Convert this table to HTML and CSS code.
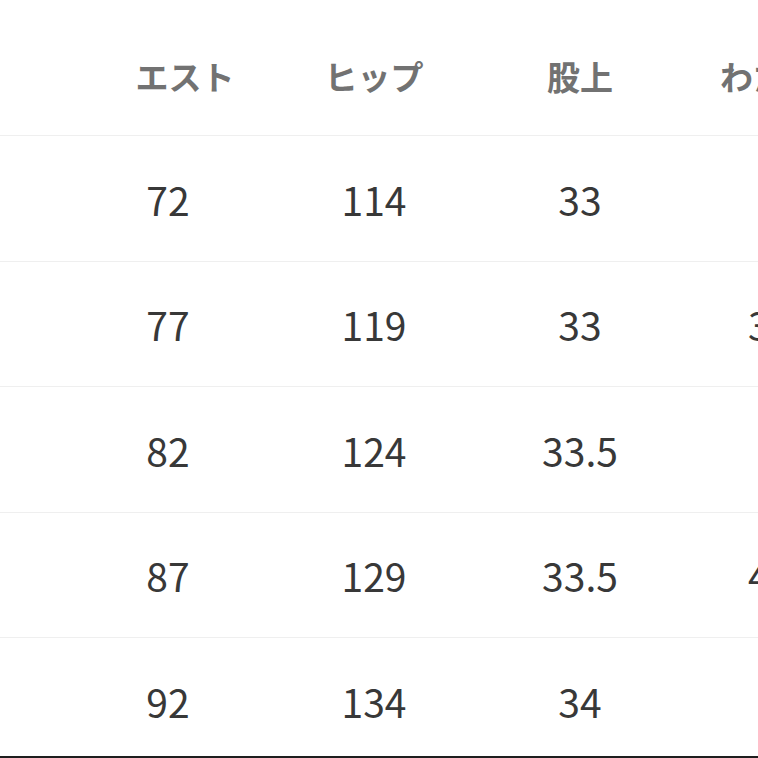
FILE: index.html
```html
<!DOCTYPE html>
<html lang="ja">
<head>
<meta charset="utf-8">
<link rel="stylesheet" href="styles.css">
</head>
<body>
<div class="frame">
  <div class="row head">
    <div class="cell hc first">エスト</div>
    <div class="cell hc">ヒップ</div>
    <div class="cell hc">股上</div>
    <div class="cell hc">わたり幅</div>
  </div>
  <div class="row">
    <div class="cell">72</div><div class="cell">114</div><div class="cell">33</div><div class="cell">29</div>
  </div>
  <div class="row">
    <div class="cell">77</div><div class="cell">119</div><div class="cell">33</div><div class="cell">31.5</div>
  </div>
  <div class="row">
    <div class="cell">82</div><div class="cell">124</div><div class="cell">33.5</div><div class="cell">34</div>
  </div>
  <div class="row">
    <div class="cell">87</div><div class="cell">129</div><div class="cell">33.5</div><div class="cell">40.5</div>
  </div>
  <div class="row last">
    <div class="cell">92</div><div class="cell">134</div><div class="cell">34</div><div class="cell">38</div>
  </div>
</div>
</body>
</html>
```
FILE: styles.css
```css
html, body {
  margin: 0;
  padding: 0;
  background: #fff;
  overflow: hidden;
}
.frame {
  width: 758px;
  height: 756px;
  overflow: hidden;
  border-bottom: 2px solid #1e1e1e;
  font-family: "Noto Sans CJK JP", "Noto Sans", sans-serif;
}
.row {
  display: grid;
  grid-template-columns: repeat(4, 206px);
  padding-left: 65px;
  height: 124.5px;
  align-items: center;
  border-bottom: 1px solid #efefef;
  width: 1000px;
}
.row.head {
  height: 135px;
}
.cell {
  text-align: center;
  font-size: 39px;
  color: #383838;
  line-height: 1;
  padding-top: 2px;
}
.hc {
  font-size: 33px;
  font-weight: 700;
  color: #727272;
  padding-top: 18px;
}
.hc.first {
  padding-left: 34px;
}
```
